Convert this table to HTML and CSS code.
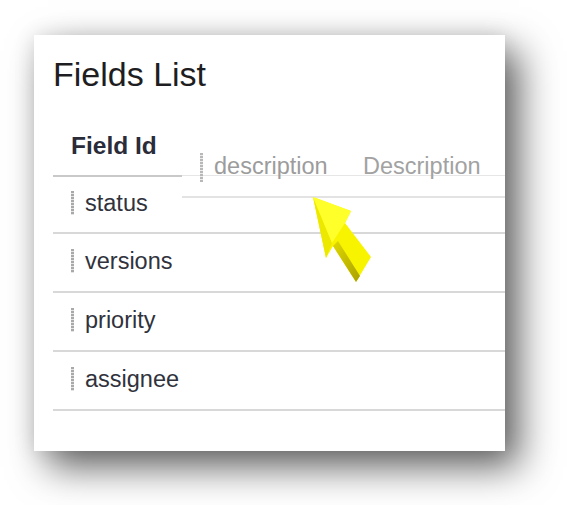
FILE: index.html
```html
<!DOCTYPE html>
<html>
<head>
<meta charset="utf-8">
<link rel="stylesheet" href="styles.css">
</head>
<body>
<div class="stage">
  <div class="card">
    <h1 class="title">Fields List</h1>
    <div class="table">
      <div class="head">
        <div class="hcell hfield">Field Id</div>
        <div class="hcell hslot"></div>
        <div class="hcell hdesc">Description</div>
      </div>
      <div class="row first"><span class="grip"></span><span class="name">status</span></div>
      <div class="row"><span class="grip"></span><span class="name">versions</span></div>
      <div class="row"><span class="grip"></span><span class="name">priority</span></div>
      <div class="row"><span class="grip"></span><span class="name">assignee</span></div>
    </div>
    <div class="ghost"><span class="grip tall"></span><span class="gtext">description</span></div>
  </div>
  <svg class="arrow" width="567" height="505" viewBox="0 0 567 505" xmlns="http://www.w3.org/2000/svg">
    <defs>
      <linearGradient id="shade" x1="0" y1="0" x2="1" y2="1">
        <stop offset="0" stop-color="#e0d800"/>
        <stop offset="1" stop-color="#aaa000"/>
      </linearGradient>
    </defs>
    <polygon points="313,197 351,211 345,223 371,257 356,282 333,246 326,258" fill="#f8f400"/>
    <polygon points="313,197 332,243 326,258" fill="#ece800"/>
    <polygon points="333,246 356,282 360,276 338,241" fill="url(#shade)"/>
    <polygon points="313,197 351,211 345,223 332,243" fill="#ffff2a"/>
  </svg>
</div>
</body>
</html>
```

FILE: styles.css
```css
html, body {
  margin: 0;
  padding: 0;
  background: #ffffff;
}

.stage {
  position: relative;
  width: 567px;
  height: 505px;
  padding: 35px 0 0 34px;
  box-sizing: border-box;
  overflow: hidden;
}

.card {
  position: relative;
  width: 471px;
  height: 416px;
  background: #ffffff;
  overflow: hidden;
  box-shadow: 14px 16px 36px rgba(0, 0, 0, 0.62), 0 0 20px rgba(0, 0, 0, 0.1);
  font-family: "Liberation Sans", Arial, sans-serif;
}

.title {
  margin: 0;
  padding: 23px 0 0 19px;
  font-size: 34px;
  line-height: 33px;
  font-weight: normal;
  color: #1e1e22;
}

.table {
  margin-left: 19px;
  width: 452px;
}

.head {
  display: flex;
  align-items: flex-start;
}

.hfield {
  width: 111px;
  height: 41px;
  padding: 43px 0 0 18px;
  border-bottom: 2px solid #c9c9c9;
  font-size: 24.5px;
  line-height: 24px;
  font-weight: bold;
  color: #2a2c3a;
}

.hslot {
  width: 165px;
  height: 84px;
  border-bottom: 1px solid #e6e6e6;
}

.hdesc {
  flex: 1;
  height: 20px;
  padding: 64px 0 0 16px;
  border-bottom: 1px solid #e6e6e6;
  font-size: 23.5px;
  line-height: 23px;
  color: #a2a2a2;
  white-space: nowrap;
}

.row {
  display: flex;
  align-items: center;
  height: 54px;
  padding: 0 0 3px 18px;
  border-bottom: 2px solid #d8d8d8;
}

.row.first {
  height: 52px;
}

.grip {
  width: 3px;
  height: 24px;
  margin-right: 11px;
  background: repeating-linear-gradient(to bottom, #a9a9a9 0 2px, #e4e4e4 2px 3px);
}

.name {
  font-size: 23.5px;
  line-height: 23px;
  color: #30323c;
}

.ghost {
  position: absolute;
  left: 148px;
  top: 105px;
  width: 340px;
  height: 56px;
  padding-left: 18px;
  border-bottom: 2px solid #e3e3e3;
  display: flex;
  align-items: flex-start;
}

.grip.tall {
  height: 29px;
  margin-top: 13px;
  margin-right: 11px;
  background: repeating-linear-gradient(to bottom, #b8b8b8 0 2px, #ececec 2px 3px);
}

.gtext {
  padding-top: 15px;
  font-size: 23.5px;
  line-height: 23px;
  color: #9c9c9c;
}

.arrow {
  position: absolute;
  left: 0;
  top: 0;
  pointer-events: none;
}
```
